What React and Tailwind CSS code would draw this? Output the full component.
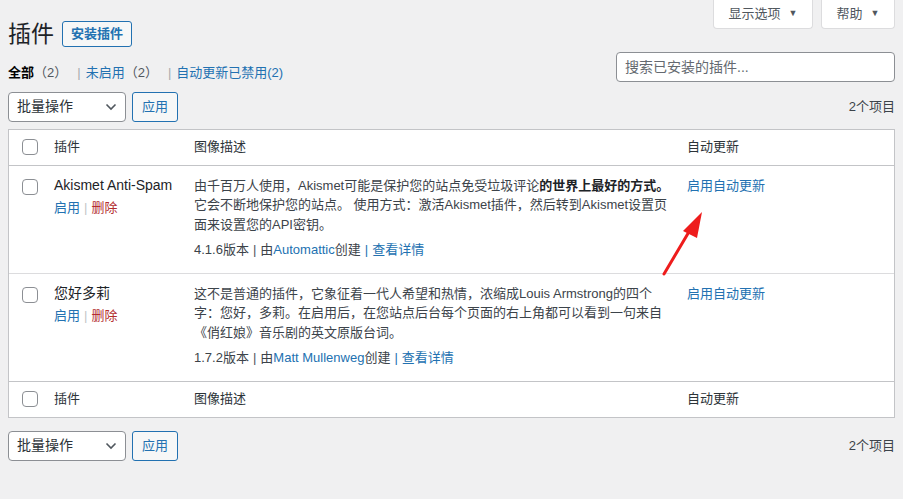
import React from 'react';

// WordPress 插件列表页

const Checkbox = () => (
  <span className="block w-4 h-4 rounded-[4px] border border-[#8c8f94] bg-white" />
);

const BulkActions = () => (
  <div className="flex items-center gap-[6px]">
    <div className="flex items-center justify-between w-[118px] h-[30px] rounded-[4px] border border-[#8c8f94] bg-white pl-[8px] pr-[8px] text-[14px] text-[#2c3338]">
      <span>批量操作</span>
      <svg width="12" height="8" viewBox="0 0 12 8" fill="none">
        <path d="M1.5 1.5 6 6l4.5-4.5" stroke="#50575e" strokeWidth="1.6" />
      </svg>
    </div>
    <button className="h-[30px] px-[9px] rounded-[3px] border border-[#2271b1] bg-[#f6f7f7] text-[13px] text-[#2271b1]">
      应用
    </button>
  </div>
);

const HeadRow = ({ top }) => (
  <div
    className={`grid grid-cols-[35px_140px_493px_1fr] h-[36px] items-center text-[13px] text-[#2c3338] ${
      top ? 'border-b border-[#c3c4c7]' : 'border-t border-[#c3c4c7]'
    }`}
  >
    <div className="pl-[13px]">
      <Checkbox />
    </div>
    <div className="px-[10px]">插件</div>
    <div className="px-[10px]">图像描述</div>
    <div className="px-[10px]">自动更新</div>
  </div>
);

const Sep = ({ className = 'text-[#50575e]' }) => <span className={`mx-[4px] ${className}`}>|</span>;

const PluginRow = ({ name, lines, version, author, last }) => (
  <div
    className={`grid grid-cols-[35px_140px_493px_1fr] pt-[10px] pb-[13px] text-[13px] leading-[19.5px] ${
      last ? '' : 'border-b border-[#dcdcde]'
    }`}
  >
    <div className="pl-[13px] pt-[3px]">
      <Checkbox />
    </div>
    <div className="px-[10px]">
      <div className="text-[14px] text-[#1d2327]">{name}</div>
      <div className="mt-[3px]">
        <span className="text-[#2271b1]">启用</span>
        <Sep className="text-[#c3c4c7]" />
        <span className="text-[#b32d2e]">删除</span>
      </div>
    </div>
    <div className="px-[10px] text-[#3c434a]">
      {lines.map((l, i) => (
        <div key={i} className="whitespace-nowrap">
          {l}
        </div>
      ))}
      <div className="mt-[6px] whitespace-nowrap">
        {version}版本
        <Sep />
        由<span className="text-[#2271b1]">{author}</span>创建
        <Sep className="text-[#2271b1]" />
        <span className="text-[#2271b1]">查看详情</span>
      </div>
    </div>
    <div className="px-[10px] text-[#2271b1]">启用自动更新</div>
  </div>
);

const App = () => {
  return (
    <div className="relative w-[903px] h-[499px] overflow-hidden bg-[#f0f0f1] px-[8px] font-['Liberation_Sans','Noto_Sans_CJK_SC',sans-serif] text-[#3c434a]">
      {/* 标题 + 顶部选项卡 */}
      <div className="flex justify-between items-start">
        <div className="flex items-center gap-[8px] pt-[21px]">
          <h1 className="text-[23px] leading-[26px] text-[#1d2327]">插件</h1>
          <button className="h-[26px] px-[8px] rounded-[3px] border border-[#2271b1] bg-[#f6f7f7] text-[13px] font-bold text-[#2271b1]">
            安装插件
          </button>
        </div>
        <div className="flex gap-[8px]">
          <div className="flex items-center gap-[8px] h-[29px] w-[100px] justify-center rounded-b-[4px] border border-t-0 border-[#dcdcde] bg-white text-[13px] text-[#50575e]">
            显示选项 <span className="text-[9px]">▼</span>
          </div>
          <div className="flex items-center gap-[8px] h-[29px] w-[74px] justify-center rounded-b-[4px] border border-t-0 border-[#dcdcde] bg-white text-[13px] text-[#50575e]">
            帮助 <span className="text-[9px]">▼</span>
          </div>
        </div>
      </div>

      {/* 过滤 + 搜索 */}
      <div className="flex justify-between items-start mt-[5px]">
        <div className="pt-[11px] text-[13px] leading-[19.5px] whitespace-nowrap">
          <span className="font-bold text-black">全部</span>
          <span className="text-[#50575e]">（2）</span>
          <span className="ml-[10px] mr-[5px] text-[#a7aaad]">|</span>
          <span className="text-[#2271b1]">未启用</span>
          <span className="text-[#50575e]">（2）</span>
          <span className="ml-[10px] mr-[5px] text-[#a7aaad]">|</span>
          <span className="text-[#2271b1]">自动更新已禁用(2)</span>
        </div>
        <div className="flex items-center w-[279px] h-[30px] rounded-[4px] border border-[#8c8f94] bg-white px-[8px] text-[14px] text-[#646970]">
          搜索已安装的插件...
        </div>
      </div>

      {/* 顶部批量操作 */}
      <div className="flex justify-between items-center mt-[9px]">
        <BulkActions />
        <span className="text-[13px] text-[#3c434a]">2个项目</span>
      </div>

      {/* 插件表格 */}
      <div className="mt-[7px] border border-[#c3c4c7] bg-white">
        <HeadRow top />
        <PluginRow
          name="Akismet Anti-Spam"
          lines={[
            <>
              由千百万人使用，Akismet可能是保护您的站点免受垃圾评论
              <b className="text-[#1d2327]">的世界上最好的方式。</b>
            </>,
            '它会不断地保护您的站点。 使用方式：激活Akismet插件，然后转到Akismet设置页',
            '面来设置您的API密钥。',
          ]}
          version="4.1.6"
          author="Automattic"
        />
        <PluginRow
          name="您好多莉"
          lines={[
            '这不是普通的插件，它象征着一代人希望和热情，浓缩成Louis Armstrong的四个',
            '字：您好，多莉。在启用后，在您站点后台每个页面的右上角都可以看到一句来自',
            '《俏红娘》音乐剧的英文原版台词。',
          ]}
          version="1.7.2"
          author="Matt Mullenweg"
          last
        />
        <HeadRow />
      </div>

      {/* 底部批量操作 */}
      <div className="flex justify-between items-center mt-[13px]">
        <BulkActions />
        <span className="text-[13px] text-[#3c434a]">2个项目</span>
      </div>

      {/* 红色箭头标注 */}
      <svg className="absolute left-[655px] top-[205px] pointer-events-none" width="60" height="80" viewBox="0 0 60 80">
        <line x1="9" y1="69" x2="38" y2="20" stroke="#ee1c1c" strokeWidth="3" strokeLinecap="round" />
        <polygon points="47,7 28,26 42,33" fill="#ee1c1c" />
      </svg>
    </div>
  );
};

export default App;
